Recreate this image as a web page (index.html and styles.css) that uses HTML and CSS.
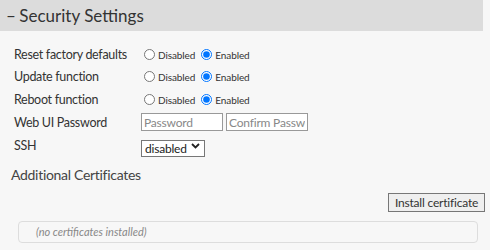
FILE: index.html
```html
<!DOCTYPE html>
<html>
<head>
<meta charset="utf-8">
<link rel="stylesheet" href="styles.css">
</head>
<body>
<div class="section-head"><span class="toggle">–</span> Security Settings</div>
<div class="settings">
  <div class="label">Reset factory defaults</div>
  <div class="field">
    <label class="opt"><input type="radio" name="r1"><span>Disabled</span></label>
    <label class="opt"><input type="radio" name="r1" checked><span>Enabled</span></label>
  </div>
  <div class="label">Update function</div>
  <div class="field">
    <label class="opt"><input type="radio" name="r2"><span>Disabled</span></label>
    <label class="opt"><input type="radio" name="r2" checked><span>Enabled</span></label>
  </div>
  <div class="label">Reboot function</div>
  <div class="field">
    <label class="opt"><input type="radio" name="r3"><span>Disabled</span></label>
    <label class="opt"><input type="radio" name="r3" checked><span>Enabled</span></label>
  </div>
  <div class="label">Web UI Password</div>
  <div class="field">
    <input class="text" type="password" placeholder="Password">
    <input class="text" type="password" placeholder="Confirm Password">
  </div>
  <div class="label">SSH</div>
  <div class="field">
    <div class="sel-wrap">
      <select class="sel"><option>disabled</option><option>enabled</option></select>
      <svg class="chev" width="9" height="6" viewBox="0 0 9 6"><path d="M1 1 L4.5 4.5 L8 1" fill="none" stroke="#222" stroke-width="1.8"/></svg>
    </div>
  </div>
</div>
<div class="subhead">Additional Certificates</div>
<div class="actions"><button class="btn">Install certificate</button></div>
<div class="certbox">(no certificates installed)</div>
</body>
</html>
```
FILE: styles.css
```css
html, body {
  margin: 0;
  padding: 0;
  background: #f7f7f7;
  font-family: "Lato", "Liberation Sans", sans-serif;
  color: #333;
}
.section-head {
  width: 477px;
  height: 31px;
  line-height: 31px;
  background: #dcdcdc;
  padding-left: 6px;
  font-size: 17px;
  color: #333;
}
.toggle {
  display: inline-block;
  width: 9px;
}
.settings {
  display: grid;
  grid-template-columns: 127px auto;
  grid-template-rows: 22.5px 22.5px 22.5px 23px 24px;
  margin-top: 12px;
  padding-left: 14px;
  align-items: center;
}
.label {
  font-size: 12.5px;
  letter-spacing: -0.3px;
}
.field {
  display: flex;
  align-items: center;
  gap: 3px;
}
.opt {
  display: flex;
  align-items: center;
  font-size: 10px;
  letter-spacing: -0.1px;
  padding-top: 1px;
}
.opt input {
  width: 11px;
  height: 11px;
  margin: 0 3px 1px 3px;
}
.text {
  box-sizing: border-box;
  width: 82px;
  height: 18px;
  border: 1px solid #999;
  background: #fff;
  padding: 0 2px;
  font-family: inherit;
  font-size: 12px;
  letter-spacing: -0.2px;
  margin: 0;
}
.text::placeholder { color: #888; }
.sel-wrap {
  position: relative;
  width: 64px;
  height: 17px;
}
.sel {
  appearance: none;
  -webkit-appearance: none;
  box-sizing: border-box;
  width: 64px;
  height: 17px;
  border: 1px solid #777;
  border-radius: 0;
  background: #fff;
  font-family: inherit;
  font-size: 12px;
  letter-spacing: -0.2px;
  color: #222;
  padding: 0 0 0 3px;
  margin: 0;
}
.chev {
  position: absolute;
  right: 5px;
  top: 6px;
  pointer-events: none;
}
.subhead {
  margin-top: 8px;
  padding-left: 11px;
  font-size: 14px;
  letter-spacing: -0.3px;
  color: #444;
}
.actions {
  display: flex;
  justify-content: flex-end;
  width: 485px;
  margin-top: 10px;
}
.btn {
  box-sizing: border-box;
  height: 19px;
  width: 97px;
  padding: 0;
  border: 1px solid #777;
  border-radius: 0;
  background: #efefef;
  font-family: inherit;
  font-size: 12px;
  letter-spacing: -0.2px;
  color: #333;
}
.certbox {
  box-sizing: border-box;
  margin: 9px 0 0 18px;
  width: 460px;
  height: 22px;
  line-height: 20px;
  border: 1px solid #ddd;
  border-radius: 4px;
  padding-left: 17px;
  font-size: 11px;
  font-style: italic;
  color: #888;
}
```
